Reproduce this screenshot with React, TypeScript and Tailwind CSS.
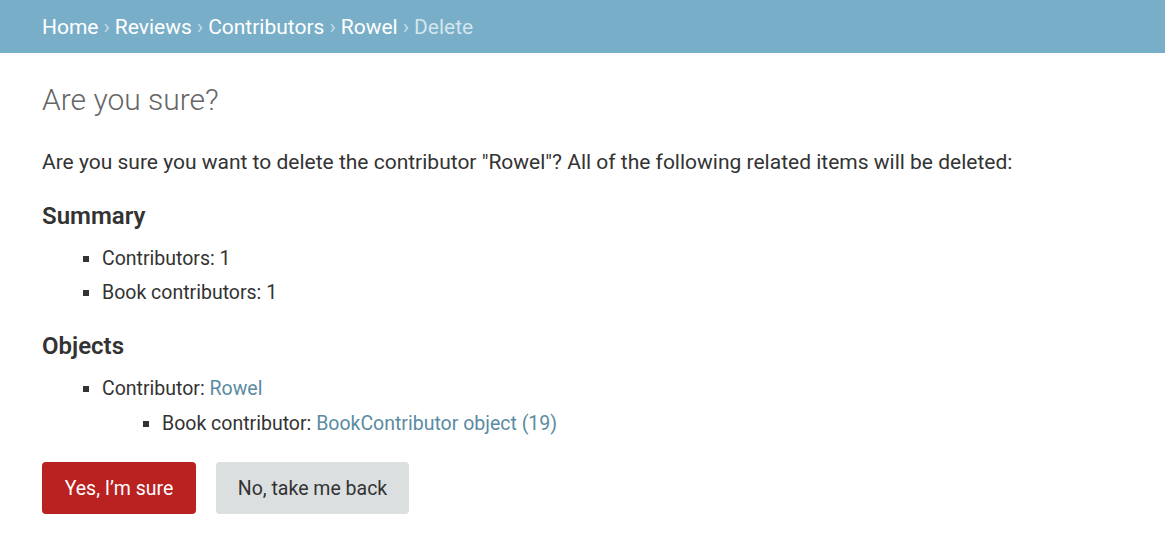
export default function App() {
  return (
    <div className="min-h-[546px] bg-white font-['Roboto',sans-serif] text-[#333]">
      {/* Breadcrumbs */}
      <div className="flex h-[53px] items-center bg-[#79aec8] px-[42px] pt-[2px] text-[21px] text-[#c4dce8]">
        <a className="text-white">Home</a>
        <span className="px-[5px]">›</span>
        <a className="text-white">Reviews</a>
        <span className="px-[5px]">›</span>
        <a className="text-white">Contributors</a>
        <span className="px-[5px]">›</span>
        <a className="text-white">Rowel</a>
        <span className="px-[5px]">›</span>
        <span className="text-[#d3e5ee]">Delete</span>
      </div>

      <div className="px-[42px]">
        <h1 className="mt-[30px] text-[30px] font-light leading-[34px] text-[#666]">Are you sure?</h1>

        <p className="mt-[32px] text-[21px] leading-[26px]">
          Are you sure you want to delete the contributor "Rowel"? All of the following related items will be deleted:
        </p>

        <h2 className="mt-[27px] text-[24px] font-semibold leading-[28px]">Summary</h2>
        <ul className="mt-[12px] list-[square] pl-[60px] text-[19.5px] leading-[34px]">
          <li>Contributors: 1</li>
          <li>Book contributors: 1</li>
        </ul>

        <h2 className="mt-[22px] text-[24px] font-semibold leading-[28px]">Objects</h2>
        <ul className="mt-[11px] list-[square] pl-[60px] text-[19.5px] leading-[35px]">
          <li>
            Contributor: <a className="text-[#5a8ba3]">Rowel</a>
            <ul className="list-[square] pl-[60px]">
              <li>
                Book contributor: <a className="text-[#5a8ba3]">BookContributor object (19)</a>
              </li>
            </ul>
          </li>
        </ul>

        <div className="mt-[21px] flex gap-[20px]">
          <button className="h-[52px] w-[154px] rounded-[4px] bg-[#ba2121] pt-[2px] text-[19.5px] text-white">
            Yes, I’m sure
          </button>
          <button className="h-[52px] w-[193px] rounded-[4px] bg-[#dcdfe0] pt-[2px] text-[19.5px] text-[#333]">
            No, take me back
          </button>
        </div>
      </div>
    </div>
  );
}
